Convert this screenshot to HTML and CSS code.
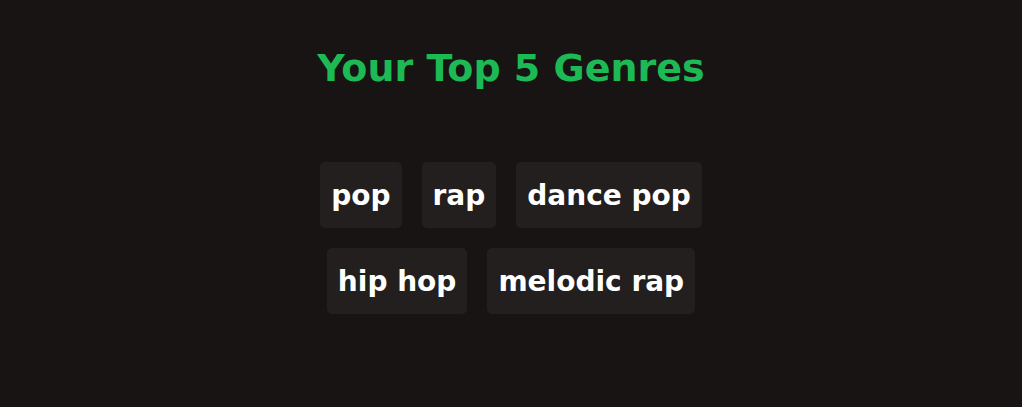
FILE: index.html
```html
<!DOCTYPE html>
<html>
<head>
<meta charset="utf-8">
<link rel="stylesheet" href="styles.css">
</head>
<body>
<main class="page">
  <h1 class="title">Your Top 5 Genres</h1>
  <ul class="genres">
    <li class="genre">pop</li>
    <li class="genre">rap</li>
    <li class="genre">dance pop</li>
    <li class="genre">hip hop</li>
    <li class="genre">melodic rap</li>
  </ul>
</main>
</body>
</html>
```
FILE: styles.css
```css
html, body {
  margin: 0;
  padding: 0;
  background: #181414;
  height: 100%;
}
.page {
  display: flex;
  flex-direction: column;
  align-items: center;
  padding-top: 44px;
}
.title {
  margin: 0;
  font-family: "DejaVu Sans", sans-serif;
  font-weight: 700;
  font-size: 38px;
  line-height: 48px;
  color: #1db954;
  letter-spacing: 0;
}
.genres {
  list-style: none;
  margin: 70px 0 0;
  padding: 0;
  width: 440px;
  display: flex;
  flex-wrap: wrap;
  justify-content: center;
  gap: 20px;
}
.genre {
  background: #231f1f;
  border-radius: 5px;
  height: 66px;
  padding: 0 11px;
  display: flex;
  align-items: center;
  font-family: "DejaVu Sans", sans-serif;
  font-weight: 700;
  font-size: 28px;
  color: #ffffff;
}
```
